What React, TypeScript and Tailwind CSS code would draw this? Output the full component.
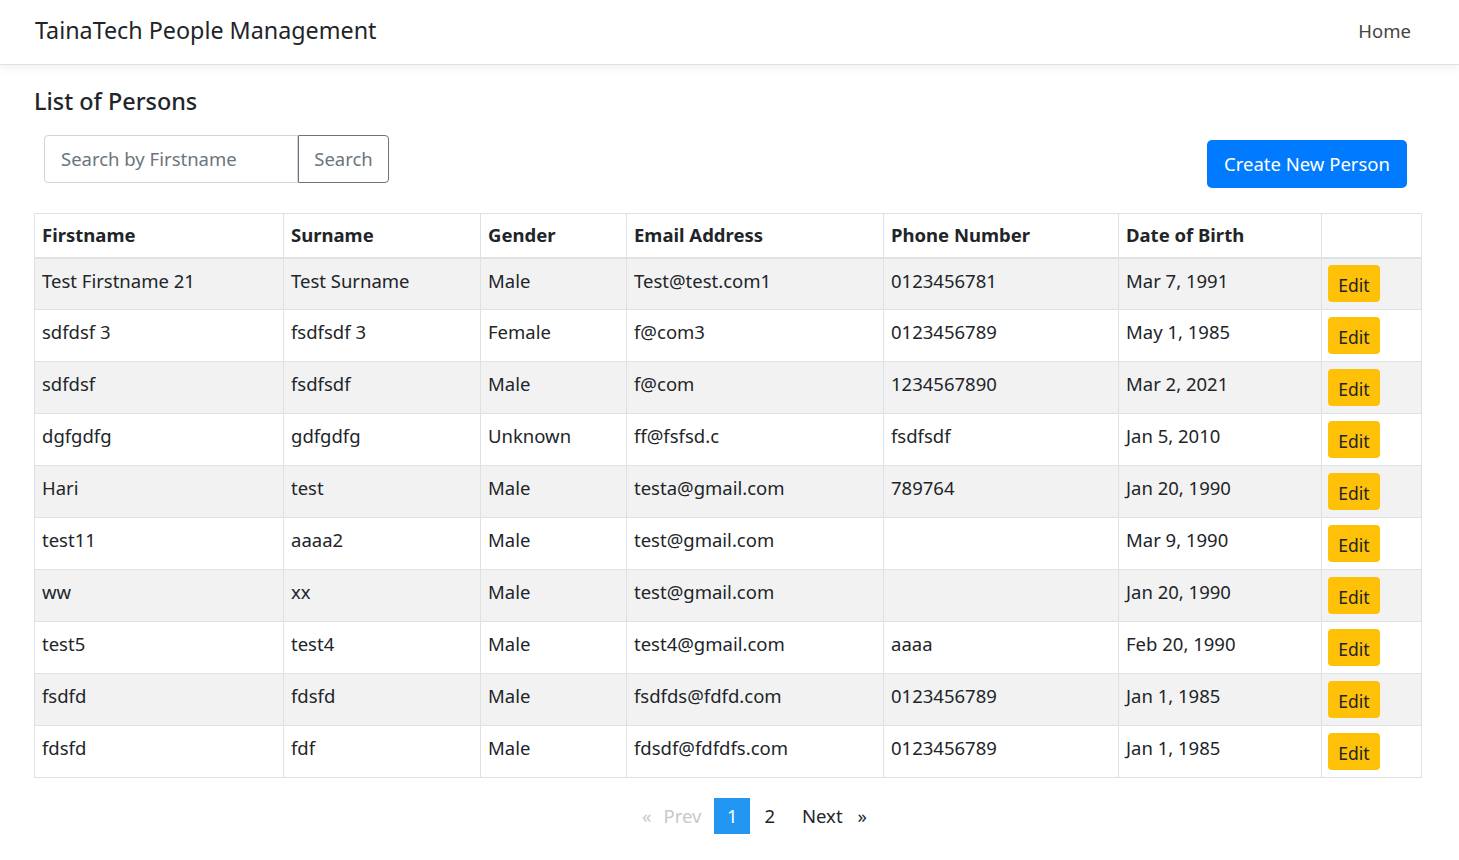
import React from "react";

type Person = {
  firstname: string;
  surname: string;
  gender: string;
  email: string;
  phone: string;
  dob: string;
};

const PEOPLE: Person[] = [
  { firstname: "Test Firstname 21", surname: "Test Surname", gender: "Male", email: "Test@test.com1", phone: "0123456781", dob: "Mar 7, 1991" },
  { firstname: "sdfdsf 3", surname: "fsdfsdf 3", gender: "Female", email: "f@com3", phone: "0123456789", dob: "May 1, 1985" },
  { firstname: "sdfdsf", surname: "fsdfsdf", gender: "Male", email: "f@com", phone: "1234567890", dob: "Mar 2, 2021" },
  { firstname: "dgfgdfg", surname: "gdfgdfg", gender: "Unknown", email: "ff@fsfsd.c", phone: "fsdfsdf", dob: "Jan 5, 2010" },
  { firstname: "Hari", surname: "test", gender: "Male", email: "testa@gmail.com", phone: "789764", dob: "Jan 20, 1990" },
  { firstname: "test11", surname: "aaaa2", gender: "Male", email: "test@gmail.com", phone: "", dob: "Mar 9, 1990" },
  { firstname: "ww", surname: "xx", gender: "Male", email: "test@gmail.com", phone: "", dob: "Jan 20, 1990" },
  { firstname: "test5", surname: "test4", gender: "Male", email: "test4@gmail.com", phone: "aaaa", dob: "Feb 20, 1990" },
  { firstname: "fsdfd", surname: "fdsfd", gender: "Male", email: "fsdfds@fdfd.com", phone: "0123456789", dob: "Jan 1, 1985" },
  { firstname: "fdsfd", surname: "fdf", gender: "Male", email: "fdsdf@fdfdfs.com", phone: "0123456789", dob: "Jan 1, 1985" },
];

const COLS = ["Firstname", "Surname", "Gender", "Email Address", "Phone Number", "Date of Birth", ""];
const WIDTHS = ["w-[249px]", "w-[197px]", "w-[146px]", "w-[257px]", "w-[235px]", "w-[203px]", "w-[100px]"];

export default function App() {
  return (
    <div className="min-h-[860px] bg-white text-[18.5px] text-[#212529] [font-family:'Noto_Sans',sans-serif]">
      <nav className="flex h-[65px] items-center justify-between border-b border-[#dee2e6] px-[35px] pb-[3px] shadow-[0_4px_8px_rgba(0,0,0,0.05)]">
        <span className="text-[23.3px] text-[#212529]">TainaTech People Management</span>
        <a className="mr-[13px] text-[18.5px] text-[#444]">Home</a>
      </nav>

      <main className="px-[34px]">
        <h4 className="pt-[20px] text-[23.4px] leading-[32px] font-medium">List of Persons</h4>

        <div className="mt-[18px] flex items-start justify-between">
          <div className="ml-[10px] flex h-[48px]">
            <input
              placeholder="Search by Firstname"
              className="w-[254px] rounded-l-[4px] border border-[#ced4da] px-[16px] text-[18.5px] outline-none placeholder:text-[#6c757d]"
            />
            <button className="w-[91px] rounded-r-[4px] border border-[#6c757d] text-[18.5px] text-[#6c757d]">Search</button>
          </div>
          <button className="mt-[5px] mr-[18px] h-[48px] w-[200px] rounded-[5px] bg-[#007bff] text-[18.5px] text-white">
            Create New Person
          </button>
        </div>

        <table className="mt-[25px] w-[1387px] table-fixed border-collapse">
          <thead>
            <tr className="h-[44px]">
              {COLS.map((c, i) => (
                <th
                  key={i}
                  className={`${WIDTHS[i]} border border-b-2 border-[#dee2e6] px-[7px] text-left align-middle font-bold`}
                >
                  {c}
                </th>
              ))}
            </tr>
          </thead>
          <tbody>
            {PEOPLE.map((p, r) => (
              <tr key={r} className={`h-[52px] ${r % 2 === 0 ? "bg-[#f2f2f2]" : "bg-white"}`}>
                {[p.firstname, p.surname, p.gender, p.email, p.phone, p.dob].map((v, i) => (
                  <td key={i} className="border border-[#dee2e6] px-[7px] pt-[9px] align-top leading-[26px]">
                    {v}
                  </td>
                ))}
                <td className="border border-[#dee2e6] px-[6px] align-middle">
                  <button className="h-[37px] w-[52px] rounded-[4px] bg-[#ffc107] pt-[3px] text-[17.5px] text-[#212529]">Edit</button>
                </td>
              </tr>
            ))}
          </tbody>
        </table>

        <div className="mt-[20px] flex items-center justify-center pl-[50px] text-[18.5px]">
          <span className="text-[#c8c8c8]">«</span>
          <span className="ml-[12px] text-[#c8c8c8]">Prev</span>
          <span className="ml-[13px] flex h-[36px] w-[36px] items-center justify-center bg-[#2196f3] text-white">1</span>
          <span className="ml-[14px]">2</span>
          <span className="ml-[27px] text-[#212529]">Next</span>
          <span className="ml-[15px] text-[#212529]">»</span>
        </div>
      </main>
    </div>
  );
}
